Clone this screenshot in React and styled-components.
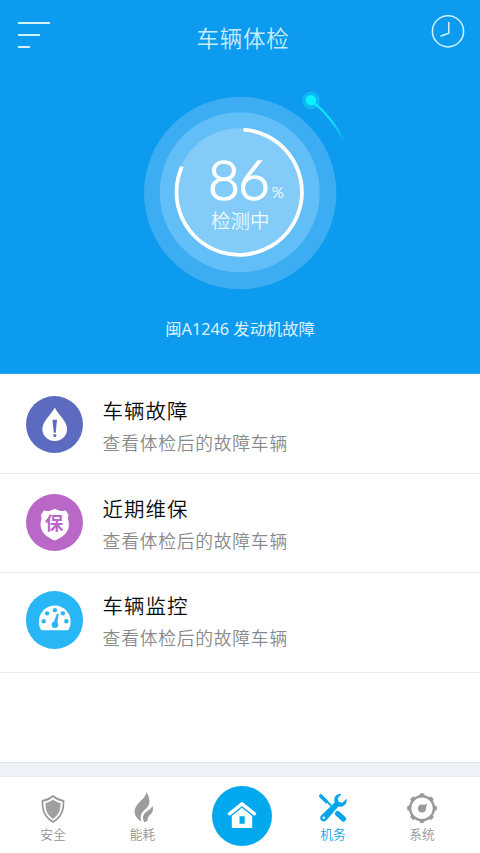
import styled, { createGlobalStyle } from "styled-components";

const GlobalStyle = createGlobalStyle`
  * {
    box-sizing: border-box;
  }
  body {
    margin: 0;
    background-color: #ffffff;
    font-family: "Noto Sans CJK SC", sans-serif;
  }
  svg {
    display: block;
  }
`;

const Screen = styled.div`
  display: flex;
  flex-direction: column;
  width: 480px;
  height: 853px;
  overflow: hidden;
`;

const Hero = styled.section`
  height: 374px;
  display: flex;
  flex-direction: column;
  background-color: #0c9bef;
  border-bottom: 1px solid #2fa6f0;
`;

const TopBar = styled.header`
  display: flex;
  justify-content: space-between;
  align-items: flex-start;
  height: 76px;
  padding: 14px 15px 0 18px;
`;

const MenuBtn = styled.button`
  display: flex;
  flex-direction: column;
  gap: 9.5px;
  width: 34px;
  padding: 7.5px 0 0;
  border: none;
  background: none;
`;

const MenuLine = styled.span`
  width: ${(props) => props.$width}px;
  height: 2.5px;
  background-color: #d3f0ff;
`;

const Title = styled.h1`
  margin: 8px 0 0 3px;
  font-size: 22.5px;
  line-height: 30px;
  font-weight: 350;
  letter-spacing: 0.8px;
  color: #c8eaff;
`;

const Gauge = styled.div`
  position: relative;
  width: 220px;
  height: 220px;
  margin: 4px 0 0 135px;
`;

const GaugeArt = styled.svg`
  width: 220px;
  height: 220px;
`;

const GaugeText = styled.div`
  position: absolute;
  top: 71px;
  left: 73px;
  color: #ffffff;
`;

const Score = styled.div`
  display: flex;
  align-items: flex-end;
  height: 56px;
  font-family: Lato, sans-serif;
  font-size: 55px;
  line-height: 56px;
  font-weight: 300;
  letter-spacing: -2px;
  -webkit-text-stroke: 1.5px #ffffff;
`;

const Percent = styled.span`
  margin: 0 0 7px 4px;
  font-size: 15.5px;
  line-height: 16px;
  letter-spacing: 0;
  -webkit-text-stroke: 0.2px #ffffff;
`;

const ScoreState = styled.div`
  margin: 1px 0 0 3px;
  font-size: 19.5px;
  line-height: 24px;
  font-weight: 350;
  color: #edf8ff;
`;

const Caption = styled.p`
  margin: 17px 0 0;
  text-align: center;
  font-family: "Noto Sans", "Noto Sans CJK SC", sans-serif;
  font-size: 16.3px;
  line-height: 24px;
  color: #dcf1ff;
`;

const List = styled.main`
  height: 389px;
  border-bottom: 1px solid #dfe4f1;
`;

const Row = styled.div`
  display: flex;
  align-items: flex-start;
  height: ${(props) => props.$height}px;
  padding: ${(props) => props.$top}px 0 0 25.6px;
  border-bottom: 1px solid #ececec;
`;

const RowIcon = styled.div`
  width: 57.5px;
  height: 57.5px;
  border-radius: 50%;
  background-color: ${(props) => props.$color};

  svg {
    width: 100%;
    height: 100%;
  }
`;

const RowText = styled.div`
  margin: -1px 0 0 19.5px;
`;

const RowTitle = styled.div`
  font-size: 20.5px;
  line-height: 30px;
  font-weight: 350;
  letter-spacing: 1px;
  color: #0c0c0c;
`;

const RowDesc = styled.div`
  margin-top: 2px;
  font-size: 17.8px;
  line-height: 30px;
  font-weight: 350;
  letter-spacing: 0.75px;
  color: #8a8a8a;
`;

const Divider = styled.div`
  height: 14px;
  background-color: #eff1f8;
  border-bottom: 1px solid #e9ebf1;
`;

const Nav = styled.nav`
  display: grid;
  grid-template-columns: 90px 89px 110px 72px 106px;
  height: 76px;
  padding-left: 8px;
  background-color: #ffffff;
`;

const NavItem = styled.div`
  display: flex;
  flex-direction: column;
  align-items: center;
  padding-top: 14px;
  font-size: 12.7px;
  line-height: 18px;
  font-weight: 350;
  color: ${(props) => (props.$active ? "#08a5ea" : "#949494")};

  svg {
    margin-bottom: -1px;
  }
`;

const HomeBtn = styled.div`
  justify-self: center;
  width: 60px;
  height: 60px;
  margin-top: 9px;
  border-radius: 50%;
  background-color: #02a8ed;
`;

const DropIcon = () => (
  <svg width="58" height="58" viewBox="0 0 58 58">
    <path
      d="M29 11.5C26 18 16.5 25.5 16.5 33.2a12.5 12.1 0 0 0 25 0C41.5 25.5 32 18 29 11.5z"
      fill="#fff"
    />
    <path d="M26.7 24h4.6l-1.3 13h-2z" fill="#5c6bc0" />
    <rect x="27.6" y="38.6" width="2.9" height="2.6" fill="#5c6bc0" />
  </svg>
);

const InsureIcon = () => (
  <svg width="58" height="58" viewBox="0 0 58 58">
    <path
      d="M18 16.3c4 2 7.5.2 11-1.5 3.5 1.7 7 3.5 11 1.5l3 5.2c-1.5 3 .3 5.500.3 9.500 0 8.500-7.500 13-14.300 16-6.800-3-14.300-7.500-14.300-16 0-4 1.800-6.500.3-9.500z"
      fill="#fff"
    />
    <text
      x="28.5"
      y="36.8"
      textAnchor="middle"
      fontFamily="Noto Sans CJK SC, sans-serif"
      fontSize="18.5"
      fontWeight="700"
      fill="#ba68c8"
    >
      保
    </text>
  </svg>
);

const MeterIcon = () => (
  <svg width="58" height="58" viewBox="0 0 58 58">
    <path
      d="M15.500 39.500C13.500 36.500 13 34 13 31a16 16.500 0 0 1 32 0c0 3-.5 5.500-2.500 8.500z"
      fill="#fff"
    />
    <g fill="#29b6f6">
      <circle cx="17.8" cy="30.5" r="2.2" />
      <circle cx="21.3" cy="22.5" r="2.2" />
      <circle cx="29.2" cy="19.3" r="2.2" />
      <circle cx="37.2" cy="22.5" r="2.2" />
      <circle cx="40.7" cy="30.5" r="2.2" />
      <path d="M31.300 22.800l1.700.4-1.600 9.300-3.500-.8z" />
      <circle cx="29.2" cy="34" r="3.3" />
    </g>
  </svg>
);

const ShieldIcon = () => (
  <svg width="30" height="35" viewBox="0 0 30 35">
    <path
      d="M15 5C12 7.500 8.500 9.300 4.500 9.800c-.3 9.200 1.800 15.700 10.500 21.200 8.700-5.500 10.800-12 10.500-21.200C21.500 9.300 18 7.500 15 5z"
      fill="none"
      stroke="#999"
      strokeWidth="1.700"
    />
    <path
      d="M15 8.600c-2.300 1.700-4.800 2.900-7.500 3.400-.2 7 1.400 11.500 7.500 15.900 6.100-4.400 7.700-8.900 7.500-15.900-2.700-.5-5.200-1.700-7.500-3.400z"
      fill="#a0a0a0"
    />
  </svg>
);

const FlameIcon = () => (
  <svg width="30" height="35" viewBox="0 0 30 35">
    <g fill="#9c9c9c">
      <path d="M18 1c1.500 5-9.500 10.500-11.200 17.500-.8 4 .8 8.500 6.700 12-1.300-3.500-1.200-6.700.9-9.300 2-2.600 5.200-4 6.700-8.200C22.300 9 20.500 4 18 1z" />
      <path d="M24.300 14.500c-.5 3.500-4.800 5-7.300 7.500-2.600 2.700-2.500 6-.7 9.200 1.500-.3 2.600-.9 3.400-1.700-.5-2.500.8-4.200 2.700-6 2.900-2.600 3.200-5.500 1.900-9z" />
    </g>
  </svg>
);

const HomeIcon = () => (
  <svg width="60" height="60" viewBox="0 0 60 60">
    <path
      d="M17.500 27.800L30 17.800l12.500 10"
      fill="none"
      stroke="#fff"
      strokeWidth="3.400"
      strokeLinecap="round"
      strokeLinejoin="round"
    />
    <path
      fillRule="evenodd"
      d="M30 21.800l10.200 8.200V41q0 1-1 1H20.800q-1 0-1-1V30zM27.500 30.200v7.600h5.200v-7.600z"
      fill="#fff"
    />
  </svg>
);

const ToolsIcon = () => (
  <svg width="30" height="35" viewBox="0 0 30 35">
    <g stroke="#08a5ea" strokeLinecap="round" fill="none">
      <path d="M2.800 5l5.500 5.500" strokeWidth="3.600" />
      <path d="M8 9.500l4.500 4.500" strokeWidth="2" />
      <path d="M19.500 22.500l6 5.500" strokeWidth="5.200" />
    </g>
    <path
      d="M23.500 3.300l-3.800 4 .9 3.500 3.700.9 4.300-3.900c.9 5-3.500 9.200-8.300 7.800L8.500 29.300c-1.600 1.700-4 1.500-5.300.1-1.400-1.500-1.400-3.600.2-5.200L16.600 11.500C15 6.300 18.700 2 23.500 3.300z"
      fill="#08a5ea"
    />
    <circle cx="5.8" cy="26.7" r="1.2" fill="#fff" />
  </svg>
);

const GearIcon = () => (
  <svg width="32" height="35" viewBox="0 0 32 35">
    <circle cx="16" cy="17.200" r="11.900" fill="none" stroke="#999" strokeWidth="2.400" />
    {[0, 45, 90, 135, 180, 225, 270, 315].map((deg) => (
      <path
        key={deg}
        d="M13.500 5.300l.7-2.600h3.600l.7 2.600z"
        fill="#999"
        stroke="#999"
        strokeWidth="0.600"
        transform={`rotate(${deg} 16 17.200)`}
      />
    ))}
    <circle cx="16" cy="17.5" r="4" fill="#999" />
    <path d="M16 14.500l5.300-1.800-2 5.300z" fill="#999" />
  </svg>
);

const rows = [
  { title: "车辆故障", color: "#5c6bc0", icon: <DropIcon />, height: 100, top: 21.6 },
  { title: "近期维保", color: "#ba68c8", icon: <InsureIcon />, height: 99, top: 19.7 },
  { title: "车辆监控", color: "#29b6f6", icon: <MeterIcon />, height: 100, top: 18.3 },
];

const App = () => {
  return (
    <Screen>
      <GlobalStyle />
      <Hero>
        <TopBar>
          <MenuBtn>
            <MenuLine $width={32} />
            <MenuLine $width={22} />
            <MenuLine $width={12} />
          </MenuBtn>
          <Title>车辆体检</Title>
          <svg width="34" height="34" viewBox="0 0 34 34">
            <g fill="none" stroke="#d3f0ff" strokeWidth="1.500">
              <circle cx="17" cy="17.300" r="15.600" />
              <path d="M17.800 8v11.200l-8.300 3" />
            </g>
          </svg>
        </TopBar>

        <Gauge>
          <GaugeArt viewBox="0 0 220 220">
            <defs>
              <linearGradient id="tail" x1="0" y1="0" x2="1" y2="1">
                <stop offset="0.5" stopColor="#0cebfd" />
                <stop offset="1" stopColor="#0cebfd" stopOpacity="0" />
              </linearGradient>
            </defs>
            <circle cx="105.2" cy="113" r="96.2" fill="#3dadf3" />
            <circle cx="104.7" cy="112.3" r="80" fill="#62bef6" />
            <circle cx="104.5" cy="112.2" r="64" fill="#83cbf8" />
            <path
              d="M108.500 49.600A62.700 62.700 0 1 1 47 86.500"
              fill="none"
              stroke="#fff"
              strokeWidth="3.800"
            />
            <circle cx="176" cy="20.500" r="9" fill="#0cb7f2" />
            <path
              d="M177.500 21.500Q197.500 37.500 209.500 62"
              fill="none"
              stroke="url(#tail)"
              strokeWidth="2.200"
            />
            <circle cx="176" cy="20.300" r="5.300" fill="#0cf0ff" />
          </GaugeArt>
          <GaugeText>
            <Score>
              86<Percent>%</Percent>
            </Score>
            <ScoreState>检测中</ScoreState>
          </GaugeText>
        </Gauge>

        <Caption>闽A1246 发动机故障</Caption>
      </Hero>

      <List>
        {rows.map((row) => (
          <Row key={row.title} $height={row.height} $top={row.top}>
            <RowIcon $color={row.color}>{row.icon}</RowIcon>
            <RowText>
              <RowTitle>{row.title}</RowTitle>
              <RowDesc>查看体检后的故障车辆</RowDesc>
            </RowText>
          </Row>
        ))}
      </List>

      <Divider />

      <Nav>
        <NavItem>
          <ShieldIcon />
          安全
        </NavItem>
        <NavItem>
          <FlameIcon />
          能耗
        </NavItem>
        <HomeBtn>
          <HomeIcon />
        </HomeBtn>
        <NavItem $active>
          <ToolsIcon />
          机务
        </NavItem>
        <NavItem>
          <GearIcon />
          系统
        </NavItem>
      </Nav>
    </Screen>
  );
};

export default App;
